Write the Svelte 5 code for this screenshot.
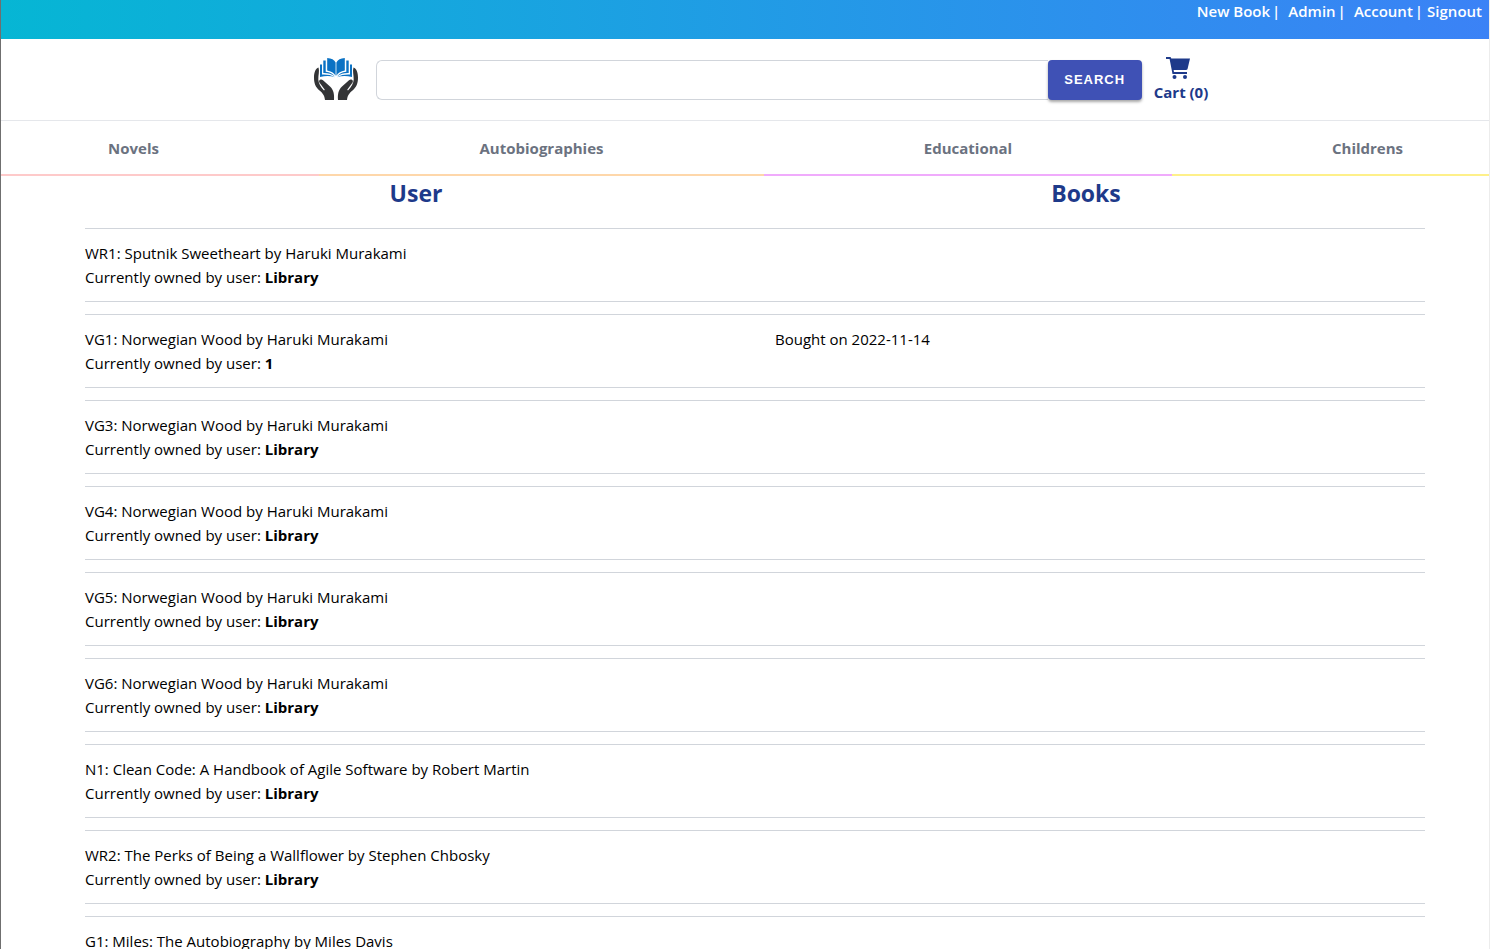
<script>
  const account = [
    { label: 'New Book', gap: 8 },
    { label: 'Admin', gap: 8 },
    { label: 'Account', gap: 4 },
    { label: 'Signout', gap: 0 }
  ];
  const categories = ['Novels', 'Autobiographies', 'Educational', 'Childrens'];
  const wood = 'Norwegian Wood by Haruki Murakami';
  const books = [
    { code: 'WR1', title: 'Sputnik Sweetheart by Haruki Murakami', owner: 'Library' },
    { code: 'VG1', title: wood, owner: '1', bought: '2022-11-14' },
    { code: 'VG3', title: wood, owner: 'Library' },
    { code: 'VG4', title: wood, owner: 'Library' },
    { code: 'VG5', title: wood, owner: 'Library' },
    { code: 'VG6', title: wood, owner: 'Library' },
    { code: 'N1', title: 'Clean Code: A Handbook of Agile Software by Robert Martin', owner: 'Library' },
    { code: 'WR2', title: 'The Perks of Being a Wallflower by Stephen Chbosky', owner: 'Library' },
    { code: 'G1', title: 'Miles: The Autobiography by Miles Davis', owner: 'Library' }
  ];
</script>

{#snippet half()}
  <path
    fill="#333436"
    d="M4.500 10.500C1.500 11.500 0 15.500 0 20.500c0 6 1.500 9.500 5.500 13C9 36.500 10.500 38.500 11 43h9c.4-6-.4-10-4-13.400L9 23.200c-2.200-1.900-5 .2-3.400 2.600l5.200 6.900-.8.800C6.500 29.500 4.500 26.500 4.300 22.500 4.200 18 5.700 14 4.500 10.500z"
  />
  <g fill="#0b72c4">
    <path d="M13.200 1c4.200.2 7.200 1.800 8.400 4.400v13.400c-1.600-3-4.600-4.800-8.400-5.400z" />
    <path d="M9.300 3.500h2.400v11.200c4.400.6 7.200 2 9.300 4.800-3.200-2.400-6.800-3.500-11.700-3.400z" />
    <path d="M6 7.500h2v10c5.200-.2 9.200.4 12.600 2.700C16.500 18.800 11.500 18.800 6 20z" />
  </g>
{/snippet}

<div class="page">
  <div class="topbar">
    {#each account as item, i}
      <a href="#top">{item.label}</a>
      {#if i < 3}<span style:margin-right="{item.gap}px">|</span>{/if}
    {/each}
  </div>

  <header>
    <a class="logo" href="#top" aria-label="Home">
      <svg viewBox="0 0 44 44" width="44" height="44">
        {@render half()}
        <g transform="matrix(-1 0 0 1 44 0)">{@render half()}</g>
      </svg>
    </a>
    <form onsubmit={(e) => e.preventDefault()}>
      <input type="text" aria-label="Search books" />
      <button type="submit">SEARCH</button>
    </form>
    <a class="cart" href="#cart">
      <svg viewBox="0 0 24 22" width="24" height="22" fill="#1e3a8a">
        <path d="M0 0h4c.6 0 1 .3 1.100.900L5.300 1.500H24l-2.400 10.200c-.2.800-.8 1.200-1.500 1.200H7.600l.4 2.200h13v1.800H6.500L3.600 2H0z" />
        <circle cx="8.500" cy="20" r="2" /><circle cx="19" cy="20" r="2" />
      </svg>
      <span>Cart (0)</span>
    </a>
  </header>

  <nav>
    {#each categories as name}<a href="#books">{name}</a>{/each}
  </nav>

  <main>
    <div class="headings"><h2>User</h2><h2>Books</h2></div>
    <ul id="books">
      {#each books as book}
        <li>
          <div>
            <p>{book.code}: {book.title}</p>
            <p>Currently owned by user: <b>{book.owner}</b></p>
          </div>
          {#if book.bought}<p>Bought on {book.bought}</p>{/if}
        </li>
      {/each}
    </ul>
  </main>
</div>

<style>
  :global(html) { scrollbar-width: none; }
  :global(body) { margin: 0; background: #fff; }
  .page {
    border-left: 1px solid #6f6f6f;
    border-right: 1px solid #ececec;
    font: 15px/24px "Open Sans", "Noto Sans", sans-serif;
    color: #000;
  }
  .page * { box-sizing: border-box; }
  a { color: inherit; text-decoration: none; }
  .topbar {
    display: flex;
    justify-content: flex-end;
    height: 39px;
    padding-right: 7px;
    background: linear-gradient(to right, #06b6d4, #3b82f6);
    color: #fff;
    font-weight: 600;
    line-height: 22px;
  }
  .topbar a:not(:last-child) { margin-right: 2px; }
  header {
    display: flex;
    align-items: center;
    justify-content: center;
    height: 82px;
    padding-left: 32px;
    border-bottom: 1px solid #e5e7eb;
  }
  .logo { display: flex; margin-right: 18px; padding-bottom: 2px; }
  form { display: flex; flex: 0 1 766px; margin-right: 12px; }
  input {
    flex: 1;
    min-width: 0;
    height: 40px;
    padding: 0 12px;
    border: 1px solid #d1d5db;
    border-right: 0;
    border-radius: 6px 0 0 6px;
    font: inherit;
  }
  button {
    width: 94px;
    height: 40px;
    padding: 0;
    border: 0;
    border-radius: 4px;
    background: #3f51b5;
    box-shadow: 0 2px 3px rgba(0, 0, 0, .35);
    color: #fff;
    font: bold 13px "Liberation Sans", sans-serif;
    letter-spacing: 1px;
  }
  .cart {
    display: flex;
    flex-direction: column;
    gap: 1px;
    padding-top: 2px;
    color: #1e3a8a;
    font-weight: 700;
  }
  .cart svg { margin-left: 12px; }
  nav {
    display: grid;
    grid-template-columns: 318fr 445fr 408fr 317fr;
    color: #6b7280;
    font-weight: 700;
    text-align: center;
  }
  nav a { padding: 15px 0 14px; border-bottom: 2px solid #fed7aa; }
  nav a:first-child { padding-right: 53px; border-color: #fecaca; }
  nav a:nth-child(3) { border-color: #f0abfc; }
  nav a:last-child { padding-left: 74px; border-color: #fef08a; }
  .headings {
    display: grid;
    grid-template-columns: 1fr 1fr;
    padding: 0 68px 0 80px;
  }
  h2 {
    margin: 0;
    color: #1e3a8a;
    font-size: 23px;
    line-height: 34px;
    font-weight: 700;
    text-align: center;
  }
  ul {
    display: grid;
    gap: 12px;
    margin: 18px 64px 0 84px;
    padding: 0;
    list-style: none;
  }
  li {
    display: grid;
    grid-template-columns: 1fr 1fr;
    gap: 40px;
    padding: 12px 0;
    border: solid #d1d5db;
    border-width: 1px 0;
  }
  p { margin: 0; }
</style>
